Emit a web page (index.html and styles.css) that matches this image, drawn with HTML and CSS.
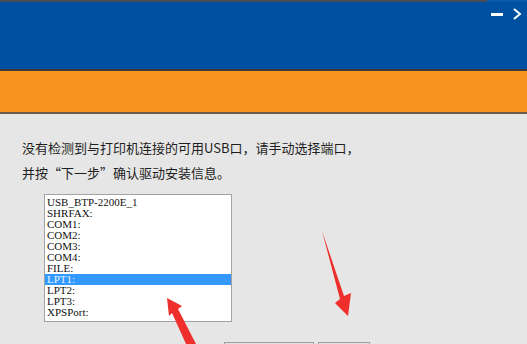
FILE: index.html
```html
<!DOCTYPE html>
<html lang="zh-CN">
<head>
<meta charset="utf-8">
<title>端口选择</title>
<link rel="stylesheet" href="styles.css">
</head>
<body>
<div class="page">
  <div class="topline"><div class="topline-dark"></div></div>
  <div class="titlebar">
    <div class="controls">
      <span class="btn-min"></span>
      <svg class="btn-close" width="9" height="12" viewBox="0 0 9 12"><path d="M1 1 L7 6 L1 11" fill="none" stroke="#fff" stroke-width="2"/></svg>
    </div>
  </div>
  <div class="sep"></div>
  <div class="banner"></div>
  <div class="sep-thin"></div>
  <div class="content">
    <p class="msg">没有检测到与打印机连接的可用USB口，请手动选择端口，</p>
    <p class="msg">并按“下一步”确认驱动安装信息。</p>
    <ul class="listbox">
      <li>USB_BTP-2200E_1</li>
      <li>SHRFAX:</li>
      <li>COM1:</li>
      <li>COM2:</li>
      <li>COM3:</li>
      <li>COM4:</li>
      <li>FILE:</li>
      <li class="selected">LPT1:</li>
      <li>LPT2:</li>
      <li>LPT3:</li>
      <li>XPSPort:</li>
    </ul>
    <div class="buttons">
      <div class="button wide"></div>
      <div class="button narrow"></div>
    </div>
  </div>
  <svg class="arrows" width="527" height="344" viewBox="0 0 527 344">
    <polygon fill="#ee2f2b" points="167,298 182,306 178,309 196,344 186,344 172,313 169,316"/>
    <polygon fill="#ee2f2b" points="322,231 344,296 351,293 348,316 335,303 340,299"/>
  </svg>
</div>
</body>
</html>
```

FILE: styles.css
```css
html, body {
  margin: 0;
  padding: 0;
}
body {
  background: #e6e6e6;
  width: 527px;
  height: 344px;
  overflow: hidden;
  font-family: "Noto Sans CJK SC", "Noto Sans", sans-serif;
}
.page {
  position: relative;
  width: 527px;
  height: 344px;
  overflow: hidden;
}
.topline {
  height: 2px;
  background: #0a58a8;
}
.topline-dark {
  width: 487px;
  height: 2px;
  background: #4a4d52;
}
.titlebar {
  height: 67px;
  background: #0050a1;
  display: flex;
  justify-content: flex-end;
  align-items: flex-start;
}
.controls {
  display: flex;
  align-items: center;
  gap: 10px;
  margin-top: 6px;
  margin-right: 5px;
}
.btn-min {
  display: block;
  width: 12px;
  height: 3px;
  background: #fff;
}
.btn-close {
  display: block;
}
.sep {
  height: 2px;
  background: #3b3a38;
}
.banner {
  height: 41px;
  background: #f7941f;
}
.sep-thin {
  height: 2px;
  background: #6b5a45;
}
.content {
  padding: 21px 0 0 22px;
}
.msg {
  margin: 0;
  font-size: 13px;
  line-height: 25px;
  color: #1e1e1e;
  white-space: nowrap;
}
.listbox {
  list-style: none;
  margin: 9px 0 0 22px;
  padding: 2px 0 1px 0;
  width: 186px;
  height: 123px;
  background: #fff;
  border: 1px solid #a2a2a2;
  box-sizing: content-box;
}
.listbox li {
  font-family: "Liberation Serif", "DejaVu Serif", serif;
  font-size: 11px;
  line-height: 11px;
  height: 11px;
  padding-left: 2px;
  color: #111;
  white-space: nowrap;
}
.listbox li.selected {
  background: #3399ff;
  color: #e8f4ff;
}
.buttons {
  display: flex;
  gap: 4px;
  margin: 20px 0 0 202px;
}
.button {
  height: 22px;
  border: 1px solid #a0a0a0;
  background: #e1e1e1;
}
.button.wide {
  width: 88px;
}
.button.narrow {
  width: 50px;
}
.arrows {
  position: absolute;
  left: 0;
  top: 0;
  pointer-events: none;
}
```
